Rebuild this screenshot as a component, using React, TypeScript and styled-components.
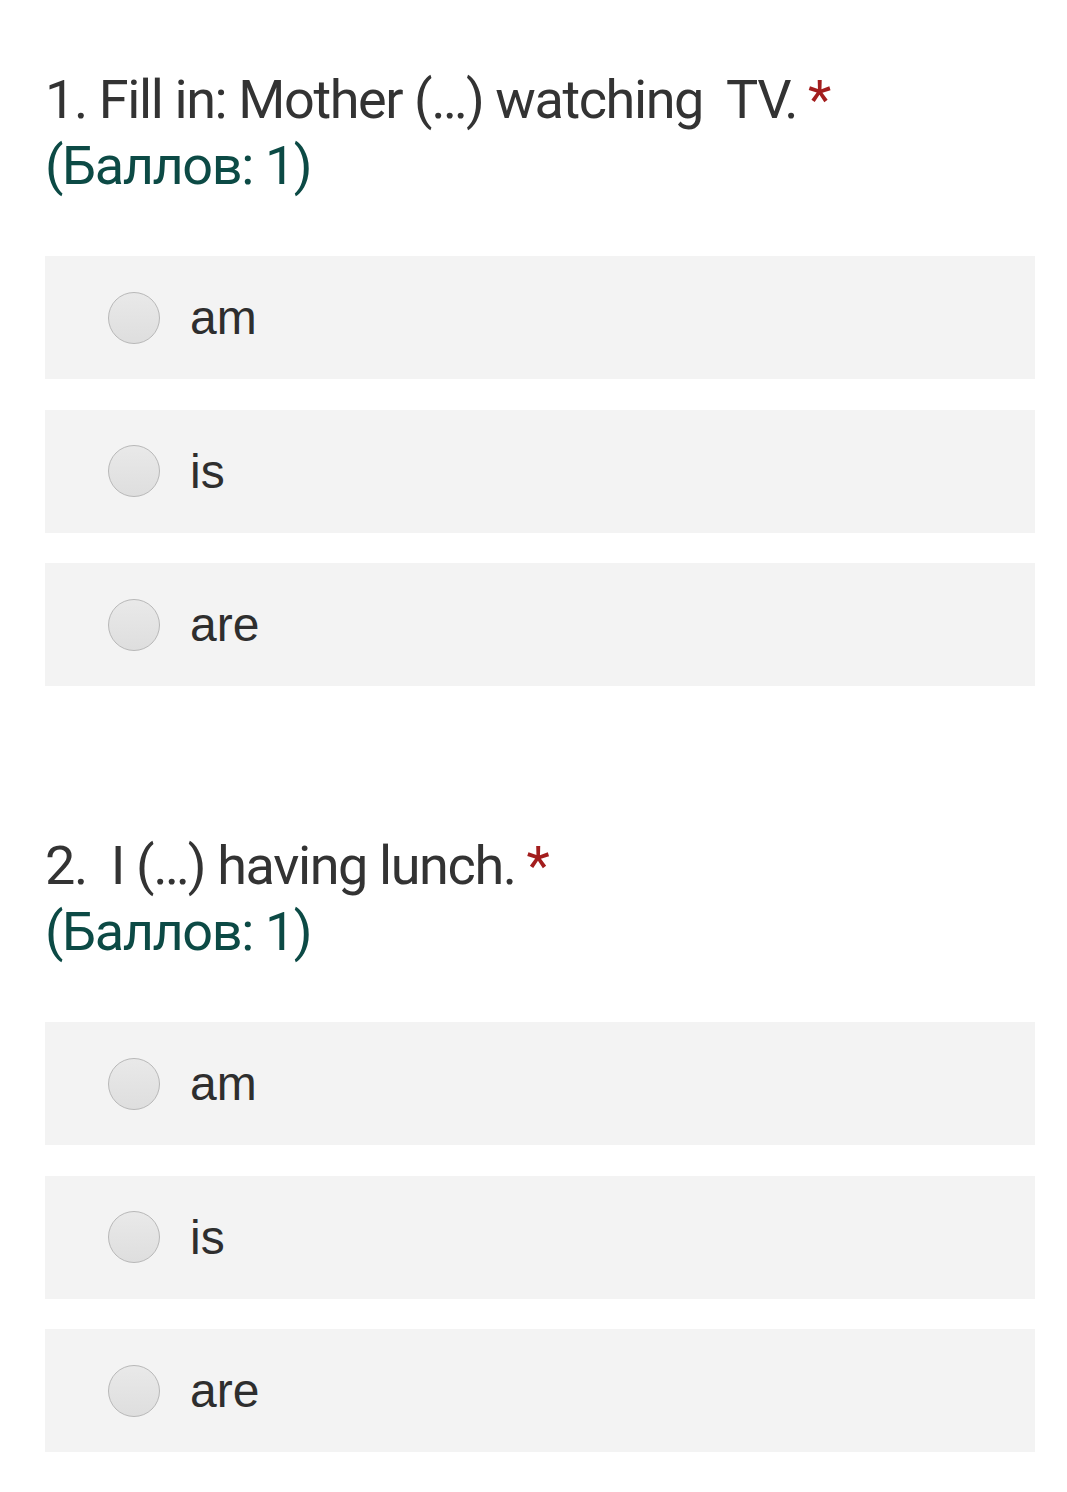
import React from "react";
import styled, { createGlobalStyle } from "styled-components";

const Global = createGlobalStyle`
  html, body { margin: 0; padding: 0; background: #ffffff; }
  body { font-family: Roboto, "Noto Sans", sans-serif; }
`;

const Page = styled.div`
  width: 1067px;
  padding: 67px 32px 40px 45px;
  box-sizing: border-box;
  display: flex;
  flex-direction: column;
  gap: 147px;
`;

const Question = styled.section`
  display: flex;
  flex-direction: column;
  gap: 57px;
`;

const Title = styled.div`
  font-family: Roboto, "Noto Sans", sans-serif;
  font-size: 54px;
  line-height: 66px;
  color: #333333;
  letter-spacing: -1.4px;
`;

const Star = styled.span`
  color: #a31d1d;
  margin-left: 11px;
`;

const Points = styled.div`
  color: #0c4a45;
`;

const Options = styled.div`
  display: flex;
  flex-direction: column;
  gap: 30.5px;
`;

const Option = styled.label`
  height: 123px;
  width: 990px;
  background: #f3f3f3;
  display: flex;
  align-items: center;
  padding-left: 63px;
  box-sizing: border-box;
  gap: 30px;
`;

const Radio = styled.span`
  width: 52px;
  height: 52px;
  border-radius: 50%;
  border: 1.5px solid #b8b8b8;
  background: linear-gradient(#e9e9e9, #dedede);
  box-sizing: border-box;
  flex-shrink: 0;
`;

const OptionText = styled.span`
  font-family: "Liberation Sans", Arial, sans-serif;
  font-size: 48px;
  color: #2e2e2e;
`;

type Q = { title: string; options: string[] };

const questions: Q[] = [
  { title: "1. Fill in: Mother (\u2026) watching\u00a0 TV.", options: ["am", "is", "are"] },
  { title: "2.\u00a0 I (\u2026) having lunch.", options: ["am", "is", "are"] },
];

export default function App() {
  return (
    <>
      <Global />
      <Page>
        {questions.map((q) => (
          <Question key={q.title}>
            <Title>
              {q.title}
              <Star>*</Star>
              <Points>(Баллов: 1)</Points>
            </Title>
            <Options>
              {q.options.map((o) => (
                <Option key={o}>
                  <Radio />
                  <OptionText>{o}</OptionText>
                </Option>
              ))}
            </Options>
          </Question>
        ))}
      </Page>
    </>
  );
}
